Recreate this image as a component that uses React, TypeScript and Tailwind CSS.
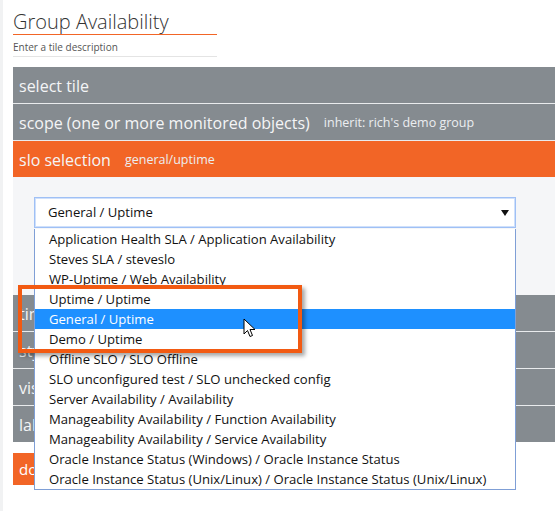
import React from "react";

const FONT = "font-['Open_Sans','Noto_Sans',sans-serif]";

const OPTIONS = [
  "Application Health SLA / Application Availability",
  "Steves SLA / steveslo",
  "WP-Uptime / Web Availability",
  "Uptime / Uptime",
  "General / Uptime",
  "Demo / Uptime",
  "Offline SLO / SLO Offline",
  "SLO unconfigured test / SLO unchecked config",
  "Server Availability / Availability",
  "Manageability Availability / Function Availability",
  "Manageability Availability / Service Availability",
  "Oracle Instance Status (Windows) / Oracle Instance Status",
  "Oracle Instance Status (Unix/Linux) / Oracle Instance Status (Unix/Linux)",
];

const SELECTED = 4;

function SectionRow({
  title,
  sub,
  orange,
  last,
}: {
  title: string;
  sub?: string;
  orange?: boolean;
  last?: boolean;
}) {
  return (
    <div
      className={[
        "flex items-center gap-[14px] px-[6px] pt-[2px] text-white",
        orange ? "h-[36px] bg-[#f26526]" : "bg-[#858b90]",
        !orange && !last ? "h-[37px] border-b border-[#e9ebed]" : "",
        !orange && last ? "h-[36px]" : "",
      ].join(" ")}
    >
      <span className="text-[16px] leading-none text-[#f4f5f6]">{title}</span>
      {sub && <span className="text-[12.5px] leading-none text-[#eceef0]">{sub}</span>}
    </div>
  );
}

function Cursor() {
  return (
    <svg width="13" height="20" viewBox="0 0 13 20" className="absolute left-[240px] top-[318px]">
      <path
        d="M1 1 L1 16 L4.5 12.5 L7 18.5 L9.5 17.5 L7 11.5 L12 11.5 Z"
        fill="#fff"
        stroke="#000"
        strokeWidth="1"
        strokeLinejoin="round"
      />
    </svg>
  );
}

export default function App() {
  return (
    <div className={`relative min-h-[511px] overflow-hidden border-l-[3px] border-[#f1f2f3] bg-white pl-[10px] ${FONT}`}>
      <div className="w-[204px] pt-[8px]">
        <h1 className="h-[27px] border-b border-[#f26526] text-[20px] font-light leading-[28px] text-[#333]">
          Group Availability
        </h1>
        <div className="mt-[5px] h-[17px] border-b border-[#e4e4e4] text-[10px] leading-[15px] text-[#555]">
          Enter a tile description
        </div>
      </div>

      <div className="mt-[10px]">
        <SectionRow title="select tile" />
        <SectionRow title="scope (one or more monitored objects)" sub="inherit: rich's demo group" />
        <SectionRow title="slo selection" sub="general/uptime" orange />

        <div className="h-[118px] bg-[#f5f6f8] pt-[20px]">
          <div className="ml-[21px] flex h-[31px] w-[482px] items-center justify-between border border-[#9fc0f5] bg-white pl-[13px] pr-[6px] shadow-[inset_0_0_0_1px_#cfe0fb]">
            <span className="text-[13.1px] text-[#111]">General / Uptime</span>
            <svg width="8" height="6" viewBox="0 0 8 6">
              <path d="M0 0 L8 0 L4 6 Z" fill="#111" />
            </svg>
          </div>
        </div>

        <SectionRow title="time" />
        <SectionRow title="style" />
        <SectionRow title="visualization" />
        <SectionRow title="label" last />

        <div className="mt-[11px] flex h-[32px] w-[120px] items-center bg-[#f26526] px-[6px] text-[15px] text-white">
          done
        </div>
      </div>

      {/* open dropdown list */}
      <ul className="absolute left-[31px] top-[229px] w-[482px] border border-t-0 border-[#7f9fd6] bg-white">
        {OPTIONS.map((o, i) => (
          <li
            key={o}
            className={[
              "h-[20px] whitespace-nowrap pl-[14px] text-[13.1px] leading-[20px]",
              i === SELECTED ? "bg-[#1e90ff] text-white" : "text-[#111]",
            ].join(" ")}
          >
            {o}
          </li>
        ))}
      </ul>

      {/* annotation box */}
      <div className="absolute left-[15px] top-[285px] h-[68px] w-[284px] border-[4px] border-[#f25a12] shadow-[3px_3px_4px_rgba(0,0,0,0.35)]" />

      <Cursor />
    </div>
  );
}
